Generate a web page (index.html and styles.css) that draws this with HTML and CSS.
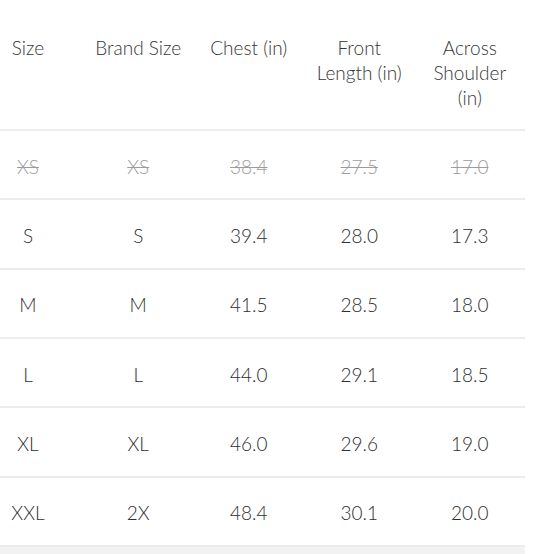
FILE: index.html
```html
<!DOCTYPE html>
<html>
<head>
<meta charset="utf-8">
<link rel="stylesheet" href="styles.css">
</head>
<body>
<div class="chart">
  <div class="row head">
    <div class="cell">Size</div>
    <div class="cell">Brand Size</div>
    <div class="cell">Chest (in)</div>
    <div class="cell">Front<br>Length (in)</div>
    <div class="cell">Across<br>Shoulder<br>(in)</div>
  </div>
  <div class="row out">
    <div class="cell">XS</div>
    <div class="cell">XS</div>
    <div class="cell">38.4</div>
    <div class="cell">27.5</div>
    <div class="cell">17.0</div>
  </div>
  <div class="row">
    <div class="cell">S</div>
    <div class="cell">S</div>
    <div class="cell">39.4</div>
    <div class="cell">28.0</div>
    <div class="cell">17.3</div>
  </div>
  <div class="row">
    <div class="cell">M</div>
    <div class="cell">M</div>
    <div class="cell">41.5</div>
    <div class="cell">28.5</div>
    <div class="cell">18.0</div>
  </div>
  <div class="row">
    <div class="cell">L</div>
    <div class="cell">L</div>
    <div class="cell">44.0</div>
    <div class="cell">29.1</div>
    <div class="cell">18.5</div>
  </div>
  <div class="row">
    <div class="cell">XL</div>
    <div class="cell">XL</div>
    <div class="cell">46.0</div>
    <div class="cell">29.6</div>
    <div class="cell">19.0</div>
  </div>
  <div class="row">
    <div class="cell">XXL</div>
    <div class="cell">2X</div>
    <div class="cell">48.4</div>
    <div class="cell">30.1</div>
    <div class="cell">20.0</div>
  </div>
  <div class="foot"></div>
</div>
</body>
</html>
```

FILE: styles.css
```css
html, body {
  margin: 0;
  padding: 0;
  background: #ffffff;
}

body {
  font-family: Lato, "Open Sans", sans-serif;
  font-weight: 300;
  font-size: 19px;
  color: #2e2e2e;
}

.chart {
  width: 525px;
}

.row {
  display: grid;
  grid-template-columns: 83px repeat(4, 1fr);
  align-items: center;
  height: 69.33px;
  box-sizing: border-box;
  padding-top: 3px;
  border-bottom: 2px solid #ececec;
}

.cell {
  text-align: center;
  line-height: 25px;
}

.cell:first-child {
  padding-right: 27px;
}

.row.head {
  height: 131px;
  align-items: start;
  padding-top: 35px;
  color: #363636;
}

.row.out .cell {
  color: #9c9c9c;
  text-decoration: line-through;
}

.foot {
  height: 10px;
  background: #f2f2f2;
}
```
